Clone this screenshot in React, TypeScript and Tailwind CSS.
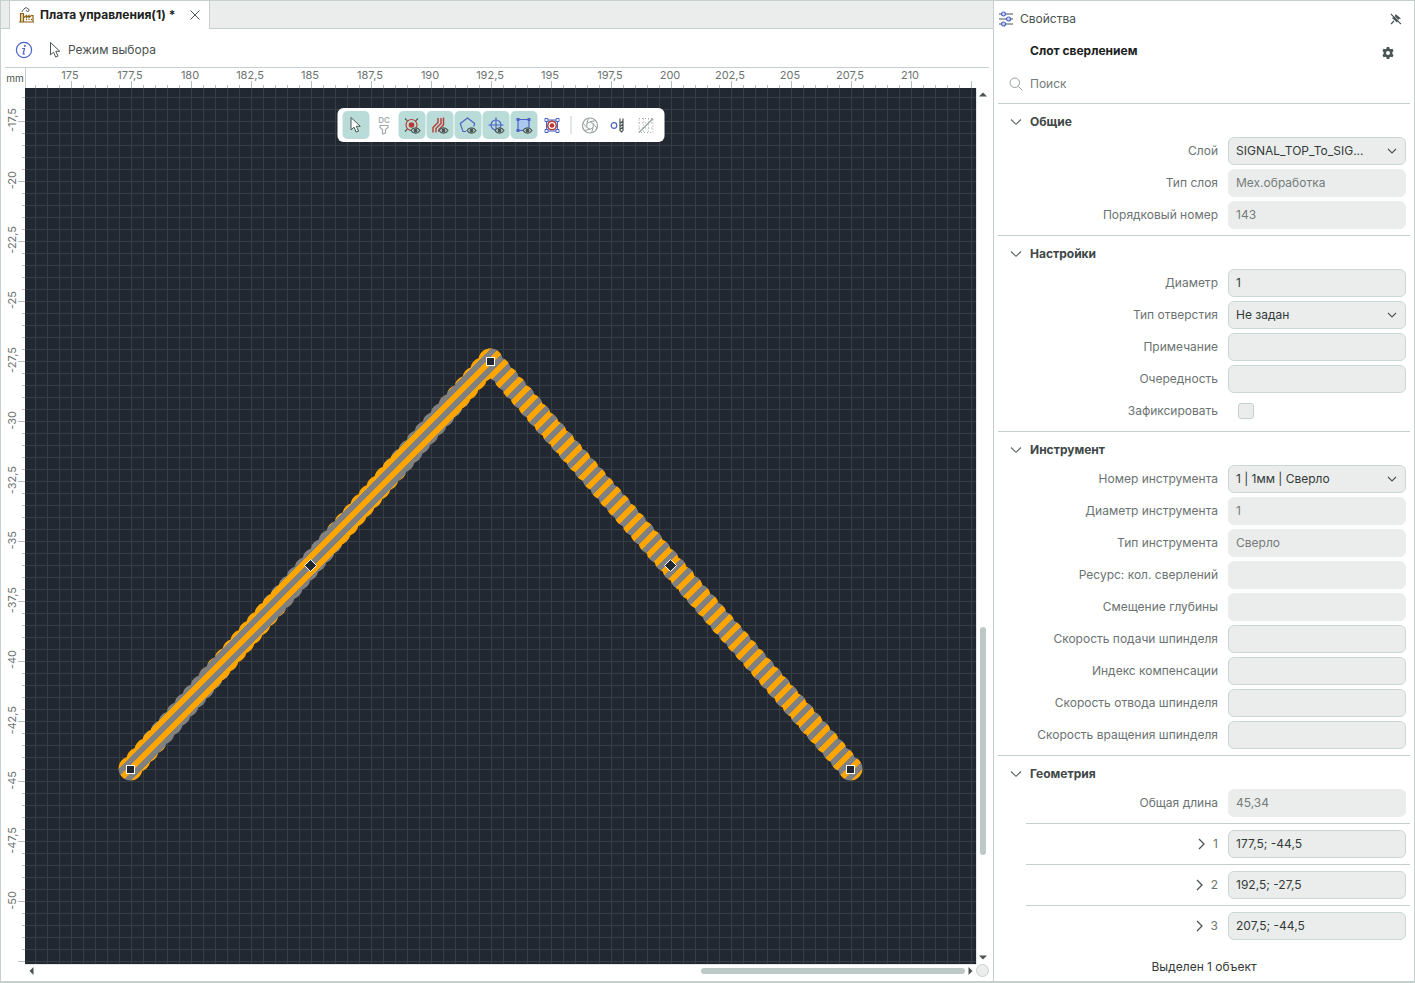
import { useState, type ReactNode } from "react";

const X_LABELS = ["175", "177,5", "180", "182,5", "185", "187,5", "190", "192,5", "195", "197,5", "200", "202,5", "205", "207,5", "210"];
const Y_LABELS = ["-17,5", "-20", "-22,5", "-25", "-27,5", "-30", "-32,5", "-35", "-37,5", "-40", "-42,5", "-45", "-47,5", "-50"];

type Point = [number, number];

// Slot vertices in canvas pixels, 24px per mm
const START: Point = [105.5, 681.5];
const APEX: Point = [465.5, 273.5];
const END: Point = [825.5, 681.5];
const DRILLS_PER_SEGMENT = 45;

interface Field {
  label: string;
  value?: string;
  kind?: "input" | "select" | "readonly" | "checkbox";
}

const GENERAL: Field[] = [
  { label: "Слой", value: "SIGNAL_TOP_To_SIG...", kind: "select" },
  { label: "Тип слоя", value: "Мех.обработка", kind: "readonly" },
  { label: "Порядковый номер", value: "143", kind: "readonly" },
];

const SETTINGS: Field[] = [
  { label: "Диаметр", value: "1" },
  { label: "Тип отверстия", value: "Не задан", kind: "select" },
  { label: "Примечание" },
  { label: "Очередность" },
  { label: "Зафиксировать", kind: "checkbox" },
];

const TOOL: Field[] = [
  { label: "Номер инструмента", value: "1 | 1мм | Сверло", kind: "select" },
  { label: "Диаметр инструмента", value: "1", kind: "readonly" },
  { label: "Тип инструмента", value: "Сверло", kind: "readonly" },
  { label: "Ресурс: кол. сверлений", kind: "readonly" },
  { label: "Смещение глубины", kind: "readonly" },
  { label: "Скорость подачи шпинделя" },
  { label: "Индекс компенсации" },
  { label: "Скорость отвода шпинделя" },
  { label: "Скорость вращения шпинделя" },
];

const VERTICES = ["177,5; -44,5", "192,5; -27,5", "207,5; -44,5"];

function drills(from: Point, to: Point): Point[] {
  return Array.from({ length: DRILLS_PER_SEGMENT + 1 }, (_, i) => {
    const t = i / DRILLS_PER_SEGMENT;
    return [from[0] + (to[0] - from[0]) * t, from[1] + (to[1] - from[1]) * t];
  });
}

function CursorIcon() {
  return (
    <svg width="16" height="18" viewBox="0 0 16 18" fill="#fff" stroke="#4a5553" strokeWidth="1" aria-hidden="true">
      <path d="M3.500 1.500v12.400l3-2.700 2.200 4.900 2.300-1-2.200-4.800h4z" strokeLinejoin="round" />
    </svg>
  );
}

function Eye() {
  return (
    <g>
      <path d="M8.500 14.500c2.200-3.600 6.800-3.600 9 0-2.200 3.600-6.800 3.600-9 0z" fill="#b9dcd8" stroke="#4a5553" strokeWidth="1.200" />
      <circle cx="13" cy="14.500" r="1.900" fill="#4a5553" />
    </g>
  );
}

function ToolSvg({ children }: { children: ReactNode }) {
  return (
    <svg width="19" height="19" viewBox="0 0 19 19" fill="none" aria-hidden="true">
      {children}
    </svg>
  );
}

const TOOLS: { name: string; active?: boolean; icon: ReactNode }[] = [
  { name: "Выбор", active: true, icon: <CursorIcon /> },
  {
    name: "Фильтр DC",
    icon: (
      <ToolSvg>
        <text x="9.500" y="7" fontSize="8" fontWeight="600" textAnchor="middle" fill="#a3adab">DC</text>
        <path d="M5.500 9.500h8v2l-2.500 2v3.500l-3 1v-4.500l-2.500-2z" stroke="#a3adab" strokeWidth="1.200" />
      </ToolSvg>
    ),
  },
  {
    name: "Отверстия",
    active: true,
    icon: (
      <ToolSvg>
        <circle cx="9" cy="9" r="5.500" stroke="#b83a34" strokeWidth="1.200" />
        <circle cx="9" cy="9" r="2.800" fill="#b83a34" />
        <path d="M2.500 2.500l2.300 2.300M15.500 2.500l-2.300 2.300M2.500 15.500l2.300-2.300" stroke="#4a5553" strokeWidth="1.200" />
        <Eye />
      </ToolSvg>
    ),
  },
  {
    name: "Проводники",
    active: true,
    icon: (
      <ToolSvg>
        <path d="M2.500 16.500v-5l5-5v-4.500M5.500 16.500v-4l5-5v-5.500M8.500 16v-2.500l4.500-4.500V1.500" stroke="#b83a34" strokeWidth="1.400" />
        <Eye />
      </ToolSvg>
    ),
  },
  {
    name: "Полигоны",
    active: true,
    icon: (
      <ToolSvg>
        <path d="M7.500 15.500h-3L1.800 7.500 9 2l7.200 5.500-1 3" stroke="#4b62c9" strokeWidth="1.200" />
        <Eye />
      </ToolSvg>
    ),
  },
  {
    name: "Точки",
    active: true,
    icon: (
      <ToolSvg>
        <circle cx="9.500" cy="9" r="5" stroke="#4b62c9" strokeWidth="1.200" />
        <path d="M9.500 1.500v15M2 9h15" stroke="#4b62c9" strokeWidth="1.200" />
        <Eye />
      </ToolSvg>
    ),
  },
  {
    name: "Области",
    active: true,
    icon: (
      <ToolSvg>
        <path d="M3.500 3.500h11v11h-11z" fill="#abc9ee" stroke="#4b62c9" strokeWidth="1.200" />
        <path d="M2 2h3v3H2zM13 2h3v3h-3zM2 13h3v3H2z" fill="#4b62c9" />
        <Eye />
      </ToolSvg>
    ),
  },
  {
    name: "Контактные площадки",
    icon: (
      <ToolSvg>
        <path d="M4 4h11v11H4z" fill="#dbe4fa" stroke="#4b62c9" />
        <path d="M4 4l11 11M15 4L4 15" stroke="#4b62c9" />
        <path d="M2.500 2.500h3v3h-3zM13.500 2.500h3v3h-3zM2.500 13.500h3v3h-3zM13.500 13.500h3v3h-3z" fill="#fff" stroke="#4b62c9" />
        <circle cx="9.500" cy="9.500" r="4.300" fill="#fff" stroke="#b83a34" strokeWidth="1.500" />
        <circle cx="9.500" cy="9.500" r="2.300" fill="#b83a34" />
      </ToolSvg>
    ),
  },
];

const EXTRA_TOOLS: { name: string; icon: ReactNode }[] = [
  {
    name: "Апертуры",
    icon: (
      <ToolSvg>
        <circle cx="9.500" cy="9.500" r="7.500" stroke="#98a3a1" strokeWidth="1.200" />
        <path d="M9.500 5.800l3.200 1.900v3.700l-3.200 1.900-3.200-1.900V7.700zM9.500 5.800l5.500-1.300M12.700 7.700l3.800 4.300M12.700 11.400l-1.700 5.400M9.500 13.300L4 14.500M6.300 11.400L2.500 7M6.300 7.700L8 2.200" stroke="#98a3a1" />
      </ToolSvg>
    ),
  },
  {
    name: "Сверло",
    icon: (
      <ToolSvg>
        <circle cx="5.500" cy="9.500" r="2.800" stroke="#4b62c9" strokeWidth="1.200" />
        <path d="M11.500 2.500v12l1.500 1.500 1.500-1.500v-12M11.500 7.500l3-2.500M11.500 10.500l3-2.500M11.500 13.500l3-2.500" stroke="#4a5553" strokeWidth="1.200" />
      </ToolSvg>
    ),
  },
  {
    name: "Сетка",
    icon: (
      <ToolSvg>
        <path d="M2.500 2.500h14v14h-14zM2.500 7h14M2.500 12h14M7 2.500v14M12 2.500v14" stroke="#a3adab" strokeDasharray="1 2" />
        <path d="M2.500 16.500l14-14" stroke="#98a3a1" strokeWidth="1.200" />
      </ToolSvg>
    ),
  },
];

function Chevron({ className }: { className?: string }) {
  return (
    <svg className={className} width="12" height="12" viewBox="0 0 12 12" fill="none" stroke="#5c6664" strokeWidth="1.100" aria-hidden="true">
      <path d="M1 3.500l5 4.800 5-4.800" />
    </svg>
  );
}

function SelectArrow() {
  return (
    <svg className="pointer-events-none absolute top-2 right-2" width="12" height="12" viewBox="0 0 12 12" fill="none" stroke="#4a5553" strokeWidth="1.100" aria-hidden="true">
      <path d="M2 4l4 4 4-4" />
    </svg>
  );
}

function Handle({ at, diamond }: { at: Point; diamond?: boolean }) {
  const [x, y] = at;
  return diamond ? (
    <path d={`M${x} ${y - 6}l6 6-6 6-6-6z`} fill="#222831" stroke="#fff" />
  ) : (
    <rect x={x - 4} y={y - 4} width="8" height="8" fill="#222831" stroke="#fff" />
  );
}

function Board() {
  return (
    <svg className="block h-full w-full" aria-label="Плата управления">
      <defs>
        <pattern id="grid" x="10" y="9" width="12" height="12" patternUnits="userSpaceOnUse">
          <path d="M0 0h12v1H1v11H0z" fill="#373e44" />
        </pattern>
        <linearGradient id="hatch" gradientUnits="userSpaceOnUse" x1="-2" y1="0" x2="6" y2="8" spreadMethod="repeat">
          <stop offset="0" stopColor="#ffa500" />
          <stop offset="0.5" stopColor="#ffa500" />
          <stop offset="0.5" stopColor="#808080" />
          <stop offset="1" stopColor="#808080" />
        </linearGradient>
      </defs>
      <rect width="100%" height="100%" fill="#222831" />
      <rect width="100%" height="100%" fill="url(#grid)" />
      <g fill="url(#hatch)">
        {[...drills(START, APEX), ...drills(APEX, END)].map(([x, y], i) => (
          <circle key={i} cx={x} cy={y - 1} r="12" />
        ))}
      </g>
      <Handle at={START} />
      <Handle at={APEX} />
      <Handle at={END} />
      <Handle at={[285.5, 477.5]} diamond />
      <Handle at={[645.5, 477.5]} diamond />
    </svg>
  );
}

function Ticks({ vertical }: { vertical?: boolean }) {
  return vertical ? (
    <svg className="absolute inset-0 h-full w-full" aria-hidden="true">
      <defs>
        <pattern id="vticks" x="0" y="33" width="20" height="60" patternUnits="userSpaceOnUse">
          <path d="M13 0h7v1h-7zM17 12h3v1h-3zM17 24h3v1h-3zM17 36h3v1h-3zM17 48h3v1h-3z" fill="#b5bfbd" />
        </pattern>
      </defs>
      <rect width="100%" height="100%" fill="url(#vticks)" />
    </svg>
  ) : (
    <svg className="absolute inset-0 h-full w-full" aria-hidden="true">
      <defs>
        <pattern id="hticks" x="45" y="0" width="60" height="20" patternUnits="userSpaceOnUse">
          <path d="M0 13h1v7H0zM12 17h1v3h-1zM24 17h1v3h-1zM36 17h1v3h-1zM48 17h1v3h-1z" fill="#b5bfbd" />
        </pattern>
      </defs>
      <rect width="100%" height="100%" fill="url(#hticks)" />
    </svg>
  );
}

function Control({ field, id }: { field: Field; id: string }) {
  const [value, setValue] = useState(field.value ?? "");
  const [checked, setChecked] = useState(false);

  if (field.kind === "checkbox") {
    return (
      <div className="flex h-7 w-[178px] items-center pl-[10px]">
        <input
          id={id}
          type="checkbox"
          checked={checked}
          onChange={(e) => setChecked(e.target.checked)}
          className="h-4 w-4 appearance-none rounded-[3px] border border-[#c5d0ce] bg-[#ebedec] checked:bg-[#4b62c9]"
        />
      </div>
    );
  }

  if (field.kind === "select") {
    return (
      <div className="relative w-[178px]">
        <select
          id={id}
          defaultValue={value}
          className="block h-7 w-full appearance-none rounded-md border border-[#cbd7d5] bg-[#ebedec] pr-8 pl-[7px] text-[#333a39]"
        >
          <option>{field.value}</option>
        </select>
        <SelectArrow />
      </div>
    );
  }

  return (
    <input
      id={id}
      type="text"
      value={value}
      onChange={(e) => setValue(e.target.value)}
      readOnly={field.kind === "readonly"}
      className="h-7 w-[178px] rounded-md border border-[#cbd7d5] bg-[#ebedec] px-[7px] pb-[2px] text-[#333a39] read-only:border-[#ebedec] read-only:text-[#757c7b]"
    />
  );
}

function Row({ field, id }: { field: Field; id: string }) {
  return (
    <div className="flex items-center justify-end gap-[10px] pr-1">
      <label htmlFor={id} className="text-[#6b7372]">{field.label}</label>
      <Control field={field} id={id} />
    </div>
  );
}

function Section({ id, title, fields, children }: { id: string; title: string; fields: Field[]; children?: ReactNode }) {
  const [open, setOpen] = useState(true);

  return (
    <section className="border-t border-[#c5d0ce]">
      <h3>
        <button
          type="button"
          aria-expanded={open}
          onClick={() => setOpen(!open)}
          className="flex h-[33px] w-full items-center gap-2 pt-[2px] pl-3 font-bold text-[#3f4847]"
        >
          <Chevron className={open ? "" : "-rotate-90"} />
          {title}
        </button>
      </h3>
      {open && (
        <>
          <div className="flex flex-col gap-1 pb-[6px]">
            {fields.map((field, i) => (
              <Row key={field.label} field={field} id={`${id}-${i}`} />
            ))}
          </div>
          {children}
        </>
      )}
    </section>
  );
}

function Properties() {
  return (
    <aside className="flex w-[421px] shrink-0 flex-col border-l border-[#c5d0ce] px-1">
      <div className="flex h-9 items-center gap-[6px] pr-2">
        <svg width="16" height="16" viewBox="0 0 16 16" fill="#cfdcfa" stroke="#4b62c9" strokeWidth="1.200" aria-hidden="true">
          <path d="M1 3h14M1 8h14M1 13h14" stroke="#4a5553" />
          <circle cx="5.500" cy="3" r="2" />
          <circle cx="10.500" cy="8" r="2" />
          <circle cx="5.500" cy="13" r="2" />
        </svg>
        <h1 className="text-[#4a5251]">Свойства</h1>
        <button type="button" aria-label="Закрепить" className="ml-auto">
          <svg width="12" height="12" viewBox="0 0 12 12" aria-hidden="true">
            <path d="M5.500 1l5.500 4.500-2 .5-2 3.500-5-4.500 3-2z" fill="#4a5553" />
            <path d="M1 11l3-3M1 1l10 10" stroke="#4a5553" strokeWidth="1.200" />
            <path d="M2 .8l10 10" stroke="#fff" strokeWidth=".7" />
          </svg>
        </button>
      </div>
      <div className="flex h-7 items-center justify-between pr-4 pl-8">
        <h2 className="font-bold text-[#1c2221]">Слот сверлением</h2>
        <button type="button" aria-label="Настройки панели" className="pt-1">
          <svg width="12" height="12" viewBox="0 0 12 12" aria-hidden="true">
            <path d="M4.800 0h2.400l.4 1.700 1.100.6 1.700-.5 1.200 2-1.200 1.300v1.800l1.200 1.300-1.200 2-1.700-.5-1.100.6-.4 1.700H4.800l-.4-1.700-1.100-.6-1.700.5-1.200-2 1.200-1.300V5.100L.4 3.800l1.200-2 1.700.5 1.100-.6z" fill="#4a5553" />
            <circle cx="6" cy="6" r="2" fill="#fff" />
          </svg>
        </button>
      </div>
      <div className="flex h-[38px] items-center gap-[7px] pl-[11px]">
        <svg width="14" height="14" viewBox="0 0 14 14" fill="none" stroke="#98a3a1" aria-hidden="true">
          <circle cx="5.800" cy="5.800" r="4.800" />
          <path d="M9.300 9.300l4 4" />
        </svg>
        <input type="text" aria-label="Поиск" placeholder="Поиск" className="flex-1 text-[#333a39] outline-none placeholder:text-[#757c7b]" />
      </div>

      <Section id="general" title="Общие" fields={GENERAL} />
      <Section id="settings" title="Настройки" fields={SETTINGS} />
      <Section id="tool" title="Инструмент" fields={TOOL} />
      <Section id="geometry" title="Геометрия" fields={[{ label: "Общая длина", value: "45,34", kind: "readonly" }]}>
        {VERTICES.map((vertex, i) => (
          <div key={vertex} className="ml-7 flex items-center justify-end gap-[10px] border-t border-[#c5d0ce] py-[6px] pr-1">
            <label htmlFor={`vertex-${i}`} className="flex items-center gap-[6px] text-[#6b7372]">
              <svg width="12" height="12" viewBox="0 0 12 12" fill="none" stroke="#4a5553" strokeWidth="1.300" aria-hidden="true">
                <path d="M4 1L9 6l-5 5" />
              </svg>
              {i + 1}
            </label>
            <Control id={`vertex-${i}`} field={{ label: String(i + 1), value: vertex }} />
          </div>
        ))}
      </Section>

      <p className="mt-auto pb-1 text-center text-[#333a39]">Выделен 1 объект</p>
    </aside>
  );
}

export default function App() {
  return (
    <div className="flex h-screen min-h-[983px] border border-b-2 border-[#c5d0ce] bg-white font-['Inter',sans-serif] text-[12px] leading-5 text-[#4a5251]">
      <main className="flex min-w-0 flex-1 flex-col">
        <div className="flex h-7 shrink-0 bg-[#ebedec]">
          <div className="w-2 border-b border-[#c5d0ce]" />
          <div className="flex w-[201px] items-center border-x border-[#c5d0ce] bg-white pr-2 pl-[9px]">
            <svg width="15" height="16" viewBox="0 0 15 16" fill="none" aria-hidden="true">
              <path d="M1.500 7h3v8h-3z" fill="#e6d5ab" />
              <path d="M0 15h15M1.500 15V6.500h3V15M5 10.500l2.500-2v2l2.500-2v2l2.500-2H14V15" stroke="#8a6112" strokeWidth="1.200" />
              <path d="M7 12.500h1M9.500 12.500h1M12 12.500h1" stroke="#8a6112" strokeWidth="1.500" />
              <path d="M3 5c0-2 1.500-1.500 2-3 1-1.800 3.500-1.500 4 0 1.500 0 1.500 2 0 2.500-1 .2-2-.5-1.500-1.500" stroke="#4a5553" />
            </svg>
            <span className="pl-[6px] font-bold whitespace-nowrap text-[#1c2221]">Плата управления(1) *</span>
            <button type="button" aria-label="Закрыть" className="ml-auto">
              <svg width="12" height="12" viewBox="0 0 12 12" stroke="#4a5553" aria-hidden="true">
                <path d="M1.500 1.500l9 9M10.500 1.500l-9 9" />
              </svg>
            </button>
          </div>
          <div className="flex-1 border-b border-[#c5d0ce]" />
        </div>

        <div className="flex h-[38px] shrink-0 items-center pt-1 pl-[14px]">
          <svg width="18" height="18" viewBox="0 0 18 18" fill="none" stroke="#4b62c9" aria-hidden="true">
            <circle cx="9" cy="9" r="7.600" strokeWidth="1.200" />
            <path d="M7.200 7.500h2.300l-1.300 5.500h1.800" strokeWidth="1.200" />
            <circle cx="9.900" cy="4.900" r=".6" fill="#4b62c9" />
          </svg>
          <span className="flex items-center gap-[5px] pl-[14px]">
            <CursorIcon />
            Режим выбора
          </span>
        </div>

        <div className="mr-1 ml-1 flex min-h-0 flex-1 flex-col border-t border-[#c5d0ce]">
          <div className="flex h-5 shrink-0">
            <div className="flex w-5 items-end justify-center text-[10px] leading-5">mm</div>
            <div className="relative flex min-w-0 flex-1 overflow-hidden border-l border-[#c5d0ce] pl-[14px] text-[11px] leading-[14px] text-[#6b7372]">
              <Ticks />
              {X_LABELS.map((label) => (
                <span key={label} className="w-[60px] shrink-0 text-center">{label}</span>
              ))}
            </div>
            <div className="w-[13px] shrink-0" />
          </div>

          <div className="flex min-h-0 flex-1">
            <div className="relative w-5 shrink-0 overflow-hidden pt-[2px] text-[11px] leading-[14px] text-[#6b7372]">
              <Ticks vertical />
              {Y_LABELS.map((label) => (
                <div key={label} className="flex h-[60px] items-center">
                  <span className="w-[14px] rotate-180 text-center [writing-mode:vertical-rl]">{label}</span>
                </div>
              ))}
            </div>

            <div className="relative min-w-0 flex-1">
              <Board />
              <div role="toolbar" className="absolute top-5 left-1/2 flex h-[34px] -translate-x-1/2 items-center gap-px rounded-md bg-white px-[5px]">
                {TOOLS.map((tool) => (
                  <button
                    key={tool.name}
                    type="button"
                    aria-label={tool.name}
                    aria-pressed={!!tool.active}
                    className={`flex h-7 w-[27px] items-center justify-center rounded-[5px] ${tool.active ? "bg-[#b9dcd8]" : ""}`}
                  >
                    {tool.icon}
                  </button>
                ))}
                <div className="mx-1 h-[18px] w-px bg-[#c5d0ce]" />
                {EXTRA_TOOLS.map((tool) => (
                  <button key={tool.name} type="button" aria-label={tool.name} className="flex h-7 w-[27px] items-center justify-center">
                    {tool.icon}
                  </button>
                ))}
              </div>
            </div>

            <div className="flex w-[13px] shrink-0 flex-col items-center border-l border-[#dfe6e5] pt-1">
              <svg width="8" height="5" viewBox="0 0 8 5" aria-hidden="true"><path d="M0 4.500h8L4 .5z" fill="#4a5553" /></svg>
              <div className="flex-1" />
              <div className="h-[228px] w-[6px] rounded-full bg-[#bdc9c7]" />
              <div className="h-[100px]" />
              <svg width="8" height="5" viewBox="0 0 8 5" aria-hidden="true"><path d="M0 .5h8L4 4.500z" fill="#4a5553" /></svg>
              <div className="h-1" />
            </div>
          </div>

          <div className="flex h-[17px] shrink-0 pl-5">
            <div className="flex h-[13px] flex-1 items-center border-t border-[#dfe6e5] pl-1">
              <svg width="5" height="8" viewBox="0 0 5 8" aria-hidden="true"><path d="M4.500 0v8L.5 4z" fill="#4a5553" /></svg>
              <div className="flex-1" />
              <div className="h-[6px] w-[264px] rounded-full bg-[#bdc9c7]" />
              <svg className="mx-[3px]" width="5" height="8" viewBox="0 0 5 8" aria-hidden="true"><path d="M.5 0v8L4.500 4z" fill="#4a5553" /></svg>
            </div>
            <div className="h-[13px] w-[13px] rounded-full border border-[#c5d0ce] bg-[#ebedec]" />
          </div>
        </div>
      </main>

      <Properties />
    </div>
  );
}
